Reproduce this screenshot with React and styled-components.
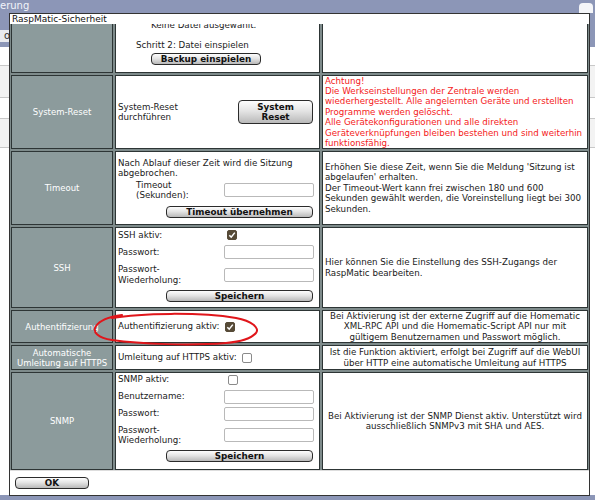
import React from "react";
import styled, { createGlobalStyle } from "styled-components";

const GlobalStyle = createGlobalStyle`
  html, body {
    margin: 0;
    padding: 0;
    background: #ffffff;
    overflow: hidden;
  }
  body {
    font-family: "DejaVu Sans", Verdana, sans-serif;
  }
`;

const Page = styled.div`
  position: relative;
  width: 595px;
  height: 500px;
  overflow: hidden;
  background: #ffffff;
`;

/* underlying page, mostly covered by the dialog */
const BgHeader = styled.div`
  height: 30px;
  background: #8c96b7;
  color: #f2f4fa;
  font-size: 10px;
  line-height: 12px;
  display: flex;
  justify-content: space-between;
`;

const BgTab = styled.div`
  margin: 3px 2px 0 0;
  width: 14px;
  height: 10px;
  background: #f4f5f8;
  border-radius: 4px 4px 0 0;
`;

const BgTabs = styled.div`
  height: 17px;
  background: #8c96b7;
  display: flex;
  justify-content: space-between;
  align-items: flex-start;
`;

const BgTabItem = styled.div`
  height: 12px;
  padding: 0 4px;
  background: #e9eaee;
  color: #333;
  font-size: 10px;
  line-height: 12px;
  border-right: 1px solid #9aa;
`;

const BgRow = styled.div`
  height: ${(p) => p.$h}px;
  border-bottom: 1px solid #c8c8c8;
  background: ${(p) => p.$bg || "#fff"};
`;

const BgFooter = styled.div`
  position: absolute;
  left: 0;
  right: 0;
  bottom: 0;
  height: 5px;
  background: #8c96b7;
`;

const Dialog = styled.div`
  position: absolute;
  left: 9px;
  top: 13px;
  width: 581px;
  height: 483px;
  box-sizing: border-box;
  border: 1px solid #333;
  background: #fff;
  display: flex;
  flex-direction: column;
`;

const Title = styled.div`
  height: 10px;
  font-size: 9px;
  line-height: 10px;
  color: #111;
  padding-left: 2px;
  background: #fff;
  overflow: hidden;
  flex: none;
`;

const Body = styled.div`
  height: 446px;
  overflow: hidden;
  flex: none;
`;

const Grid = styled.div`
  margin-top: -21px;
  display: grid;
  grid-template-columns: 102px 205px 1fr;
  gap: 2px;
  padding: 1px;
  background: #7e8b8b;
`;

const Cell = styled.div`
  box-sizing: border-box;
  height: ${(p) => p.$h}px;
  border: 1px solid #2d3535;
  font-size: 8.7px;
  line-height: 10.4px;
  color: #1a1a1a;
  overflow: hidden;
`;

const Label = styled(Cell)`
  background: #8c9b9c;
  color: #ffffff;
  display: flex;
  align-items: center;
  justify-content: center;
  text-align: center;
  font-size: 8.5px;
  line-height: 10px;
`;

const Middle = styled(Cell)`
  background: #fff;
  padding: 0 6px 0 2px;
  display: flex;
  flex-direction: column;
  justify-content: ${(p) => p.$justify || "center"};
`;

const Info = styled(Cell)`
  background: #fff;
  padding: 0 2px;
  display: flex;
  align-items: center;
  justify-content: ${(p) => (p.$center ? "center" : "flex-start")};
  text-align: ${(p) => (p.$center ? "center" : "left")};
  color: ${(p) => (p.$red ? "#f41a1a" : "#1a1a1a")};
`;

const Button = styled.button`
  box-sizing: border-box;
  width: ${(p) => p.$w}px;
  height: ${(p) => p.$h || 12}px;
  margin: ${(p) => p.$m || "0"};
  align-self: ${(p) => p.$align || "flex-end"};
  padding: 0;
  border: 1px solid #2b2b2b;
  border-radius: 4px;
  background: linear-gradient(#fdfdfd, #e4e4e4 45%, #b9b9b9);
  font-family: "DejaVu Sans", Verdana, sans-serif;
  font-weight: bold;
  font-size: 8.8px;
  line-height: 10px;
  color: #111;
  flex: none;
`;

const FormRow = styled.div`
  display: grid;
  grid-template-columns: ${(p) => p.$indent || 106}px 90px;
  align-items: center;
  min-height: ${(p) => p.$h || 12}px;
  margin-top: ${(p) => p.$mt || 0}px;
  padding-left: ${(p) => p.$pad || 0}px;
`;

const Input = styled.input`
  box-sizing: border-box;
  width: 90px;
  height: 14px;
  border: 1px solid #b9b9b9;
  border-radius: 2px;
  background: #fff;
  padding: 0;
`;

const Check = styled.span`
  box-sizing: border-box;
  display: inline-flex;
  align-items: center;
  justify-content: center;
  width: 10px;
  height: 10px;
  margin-left: ${(p) => p.$ml || 0}px;
  border-radius: 2px;
  background: ${(p) => (p.$on ? "#564a37" : "#fff")};
  border: 1px solid ${(p) => (p.$on ? "#564a37" : "#8a8a8a")};
  vertical-align: middle;
`;

const InlineRow = styled.div`
  display: flex;
  align-items: center;
`;

const Footer = styled.div`
  flex: 1;
  display: flex;
  align-items: flex-start;
  padding: 6px 0 0 5px;
  border-top: 1px solid #ddd;
`;

const Annotation = styled.svg`
  position: absolute;
  left: 0;
  top: 0;
  pointer-events: none;
`;

const CheckBox = ({ on, ml }) => (
  <Check $on={on} $ml={ml}>
    {on && (
      <svg width="8" height="8" viewBox="0 0 8 8">
        <path d="M1.3 4.2 L3.2 6.1 L6.8 1.6" fill="none" stroke="#fff" strokeWidth="1.5" />
      </svg>
    )}
  </Check>
);

export default function App() {
  return (
    <Page>
      <GlobalStyle />
      <BgHeader>
        <span>erung</span>
        <BgTab />
      </BgHeader>
      <BgTabs>
        <BgTabItem>of</BgTabItem>
      </BgTabs>
      <BgRow $h={18} />
      <BgRow $h={31} $bg="#f3f3f3" />
      <BgRow $h={20} />
      <BgRow $h={28} $bg="#f3f3f3" />
      <BgFooter />

      <Dialog>
        <Title>RaspMatic-Sicherheit</Title>
        <Body>
          <Grid>
            <Label $h={69} />
            <Middle $h={69} $justify="flex-end">
              <div style={{ paddingLeft: 33 }}>Keine Datei ausgewählt.</div>
              <div style={{ paddingLeft: 18, marginTop: 9 }}>Schritt 2: Datei einspielen</div>
              <Button $w={110} $align="flex-start" $m="3px 0 7px 33px">
                Backup einspielen
              </Button>
            </Middle>
            <Info $h={69} />

            <Label $h={74}>System-Reset</Label>
            <Middle $h={74}>
              <InlineRow>
                <div style={{ flex: 1 }}>
                  System-Reset
                  <br />
                  durchführen
                </div>
                <Button $w={75} $h={24} $align="center">
                  System
                  <br />
                  Reset
                </Button>
              </InlineRow>
            </Middle>
            <Info $h={74} $red>
              <div>
                Achtung!
                <br />
                Die Werkseinstellungen der Zentrale werden wiederhergestellt. Alle angelernten
                Geräte und erstellten Programme werden gelöscht.
                <br />
                Alle Gerätekonfigurationen und alle direkten Geräteverknüpfungen bleiben
                bestehen und sind weiterhin funktionsfähig.
              </div>
            </Info>

            <Label $h={74}>Timeout</Label>
            <Middle $h={74}>
              <div>Nach Ablauf dieser Zeit wird die Sitzung abgebrochen.</div>
              <FormRow $indent={88} $pad={18} $mt={1}>
                <div>
                  Timeout
                  <br />
                  (Sekunden):
                </div>
                <Input />
              </FormRow>
              <Button $w={147} $m="6px 0 0 0">
                Timeout übernehmen
              </Button>
            </Middle>
            <Info $h={74}>
              <div>
                Erhöhen Sie diese Zeit, wenn Sie die Meldung 'Sitzung ist abgelaufen' erhalten.
                <br />
                Der Timeout-Wert kann frei zwischen 180 und 600 Sekunden gewählt werden, die
                Voreinstellung liegt bei 300 Sekunden.
              </div>
            </Info>

            <Label $h={81}>SSH</Label>
            <Middle $h={81}>
              <FormRow>
                <div>SSH aktiv:</div>
                <div>
                  <CheckBox on ml={3} />
                </div>
              </FormRow>
              <FormRow $h={16} $mt={3}>
                <div>Passwort:</div>
                <Input />
              </FormRow>
              <FormRow $mt={4}>
                <div>
                  Passwort-
                  <br />
                  Wiederholung:
                </div>
                <Input />
              </FormRow>
              <Button $w={147} $m="5px 0 4px 0">
                Speichern
              </Button>
            </Middle>
            <Info $h={81}>
              <div>Hier können Sie die Einstellung des SSH-Zugangs der RaspMatic bearbeiten.</div>
            </Info>

            <Label $h={33}>Authentifizierung</Label>
            <Middle $h={33}>
              <InlineRow>
                Authentifizierung aktiv:
                <CheckBox on ml={6} />
              </InlineRow>
            </Middle>
            <Info $h={33} $center>
              <div>
                Bei Aktivierung ist der externe Zugriff auf die Homematic XML-RPC API und die
                Homematic-Script API nur mit gültigem Benutzernamen und Passwort möglich.
              </div>
            </Info>

            <Label $h={25}>
              Automatische
              <br />
              Umleitung auf HTTPS
            </Label>
            <Middle $h={25}>
              <InlineRow>
                Umleitung auf HTTPS aktiv:
                <CheckBox ml={5} />
              </InlineRow>
            </Middle>
            <Info $h={25} $center>
              <div>
                Ist die Funktion aktiviert, erfolgt bei Zugriff auf die WebUI über HTTP eine
                automatische Umleitung auf HTTPS
              </div>
            </Info>

            <Label $h={98}>SNMP</Label>
            <Middle $h={98}>
              <FormRow>
                <div>SNMP aktiv:</div>
                <div>
                  <CheckBox ml={4} />
                </div>
              </FormRow>
              <FormRow $h={16} $mt={3}>
                <div>Benutzername:</div>
                <Input />
              </FormRow>
              <FormRow $h={16} $mt={1}>
                <div>Passwort:</div>
                <Input />
              </FormRow>
              <FormRow $mt={3}>
                <div>
                  Passwort-
                  <br />
                  Wiederholung:
                </div>
                <Input />
              </FormRow>
              <Button $w={147} $m="5px 0 6px 0">
                Speichern
              </Button>
            </Middle>
            <Info $h={98} $center>
              <div>
                Bei Aktivierung ist der SNMP Dienst aktiv. Unterstützt wird ausschließlich
                SNMPv3 mit SHA und AES.
              </div>
            </Info>
          </Grid>
        </Body>
        <Footer>
          <Button $w={74} $align="flex-start">
            OK
          </Button>
        </Footer>
      </Dialog>

      <Annotation width="595" height="500" viewBox="0 0 595 500">
        <path
          d="M112 318 C 140 313, 200 312, 236 318 C 252 321, 260 328, 256 333 C 250 340, 238 342, 226 343 C 190 346, 140 344, 112 340 C 98 338, 92 332, 96 326 C 100 320, 108 317, 122 315"
          fill="none"
          stroke="#e0161b"
          strokeWidth="2"
          strokeLinecap="round"
        />
      </Annotation>
    </Page>
  );
}
